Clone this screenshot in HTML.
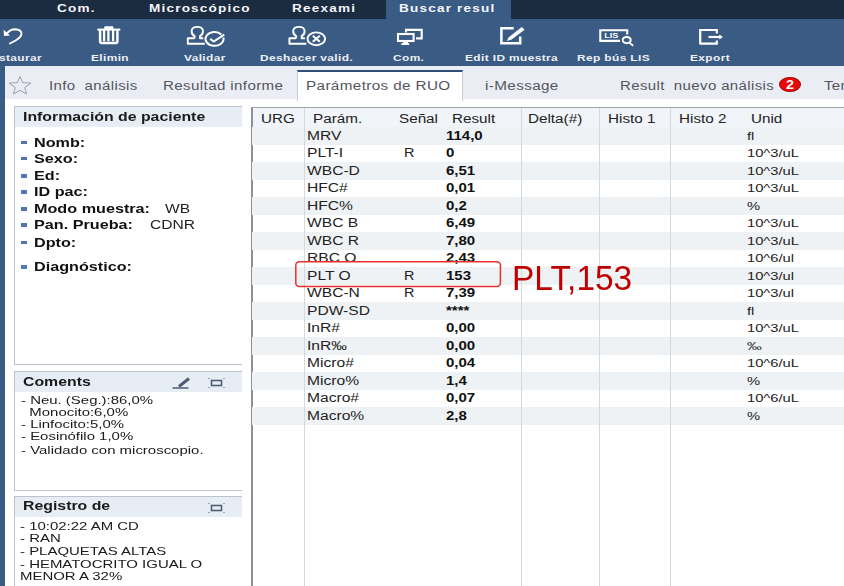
<!DOCTYPE html><html><head><meta charset="utf-8"><style>
*{margin:0;padding:0;box-sizing:border-box}
html,body{width:844px;height:586px;overflow:hidden;background:#fff;font-family:"Liberation Sans",sans-serif}
body{position:relative}
.a{position:absolute;white-space:nowrap;transform-origin:0 0}
.tt{color:#f4f6fa;font-weight:bold;font-size:11.4px;line-height:13px;letter-spacing:1px}
.tl{color:#eef1f6;font-weight:bold;font-size:9.3px;line-height:11px;letter-spacing:0.3px}
.tb{color:#55555e;font-size:12px;line-height:14px;letter-spacing:0.3px}
.ph{font-weight:bold;color:#1a1a1a;font-size:12px;line-height:14px}
.pi{font-weight:bold;color:#111;font-size:13px;line-height:15px}
.pv{color:#222;font-size:12px;line-height:14px}
.cm{color:#1a1a1a;font-size:11.5px;line-height:13px}
.th{color:#222;font-size:12px;line-height:14px}
.td{color:#222;font-size:12px;line-height:14px}
.tr{color:#111;font-size:12px;line-height:14px;font-weight:bold}
.un{color:#222;font-size:11.5px;line-height:14px}
svg{position:absolute;overflow:visible}
</style></head><body><div id="wrap" style="position:absolute;left:0;top:0;width:844px;height:586px;overflow:hidden;filter:blur(0.35px)">
<div class="a" style="left:0;top:0;width:844px;height:19px;background:#1b2b40"></div>
<div class="a" style="left:386px;top:0;width:125px;height:19px;background:#3a5b83"></div>
<div class="a tt" style="left:57px;top:2.3px;transform:scaleX(1.19);">Com.</div>
<div class="a tt" style="left:149px;top:2.3px;transform:scaleX(1.19);">Microscópico</div>
<div class="a tt" style="left:292px;top:2.3px;transform:scaleX(1.19);">Reexami</div>
<div class="a tt" style="left:399px;top:2.3px;transform:scaleX(1.19);">Buscar resul</div>
<div class="a" style="left:0;top:19px;width:844px;height:47px;background:#3a5b83"></div>
<div class="a tl" style="left:-17px;top:53.2px;transform:scaleX(1.28);">Restaurar</div>
<div class="a tl" style="left:91px;top:53.2px;transform:scaleX(1.28);">Elimin</div>
<div class="a tl" style="left:184px;top:53.2px;transform:scaleX(1.28);">Validar</div>
<div class="a tl" style="left:260px;top:53.2px;transform:scaleX(1.28);">Deshacer valid.</div>
<div class="a tl" style="left:393px;top:53.2px;transform:scaleX(1.28);">Com.</div>
<div class="a tl" style="left:465px;top:53.2px;transform:scaleX(1.28);">Edit ID muestra</div>
<div class="a tl" style="left:577px;top:53.2px;transform:scaleX(1.28);">Rep bús LIS</div>
<div class="a tl" style="left:690px;top:53.2px;transform:scaleX(1.28);">Export</div>
<svg style="left:0;top:0" width="844" height="66"><path d="M7 33.5 Q10 29.3 15 29.3 Q21 29.5 21.5 33.5 Q21.5 37 15.5 40.5 L10 43.5" stroke="#fff" fill="none" stroke-width="1.9" stroke-linecap="round"/><path d="M3.6 29.8 L4 36 L10 35.5 Z" fill="#fff"/><rect x="104.2" y="26.2" width="9.3" height="3" rx="1.2" fill="#fff"/><rect x="97.3" y="28.6" width="23" height="2" fill="#fff"/><path d="M100.1 30 V41.3 Q100.1 43 101.8 43 H115.7 Q117.4 43 117.4 41.3 V30" stroke="#fff" fill="none" stroke-width="2.5"/><path d="M104.1 30 V41.3 M108.4 30 V41.3 M113.1 30 V41.3" stroke="#fff" fill="none" stroke-width="2.3"/><path d="M194.6 38.3 V36.2 Q191.4 34.5 191.6 30.8 Q192.0 26.9 197.3 26.9 Q202.6 26.9 203.0 30.8 Q203.2 34.5 200.0 36.2 V38.3 H203.3 M194.6 38.3 H187.8 V43.8 H204.8" stroke="#fff" fill="none" stroke-width="1.9" stroke-linejoin="round"/><path d="M221.4 34.4 A9 6.9 0 1 0 223.4 37.6" stroke="#fff" fill="none" stroke-width="2"/><path d="M210.2 38.9 L213.7 41.6 L224.3 34.6" stroke="#fff" fill="none" stroke-width="2"/><path d="M296.2 38.3 V36.2 Q293.0 34.5 293.2 30.8 Q293.6 26.9 298.9 26.9 Q304.2 26.9 304.6 30.8 Q304.8 34.5 301.6 36.2 V38.3 H304.9 M296.2 38.3 H289.4 V43.8 H306.4" stroke="#fff" fill="none" stroke-width="1.9" stroke-linejoin="round"/><ellipse cx="316.3" cy="38.8" rx="8.8" ry="6.4" stroke="#fff" fill="none" stroke-width="1.9"/><path d="M312.8 35.8 L319.8 41.8 M319.8 35.8 L312.8 41.8" stroke="#fff" fill="none" stroke-width="2"/><path d="M406 32.5 V29.9 H421.7 V38.4 H416" stroke="#fff" fill="none" stroke-width="2.1"/><rect x="398" y="34" width="15.6" height="7" stroke="#fff" fill="none" stroke-width="2.1"/><path d="M403.4 41.5 H407.6 L408.3 43.3 H409.2 V45 H401.3 V43.3 H402.7 Z" fill="#fff"/><path d="M513.7 28.3 H501.4 V43.3 H520.2 V36.6" stroke="#fff" fill="none" stroke-width="2.5"/><path d="M506.8 41 L508.8 37.2 L521.8 27.1 L524.6 29.8 L511.6 39.6 Z" fill="#fff"/><path d="M620 40.9 H600.3 V30.3 H627.2 V34.4" stroke="#fff" fill="none" stroke-width="2.1"/><text x="503.5" y="38" fill="#fff" font-family="Liberation Sans" font-weight="bold" font-size="7.6" transform="scale(1.2 1)">LIS</text><ellipse cx="626.7" cy="40.1" rx="4" ry="3.1" stroke="#fff" fill="none" stroke-width="2"/><path d="M629.3 42.6 L633.2 45.8" stroke="#fff" fill="none" stroke-width="1.8"/><path d="M716.8 33.5 V30 H700.2 V43.5 Q700.2 43.6 700.4 43.6 H716.8 V40.5" stroke="#fff" fill="none" stroke-width="2.2"/><path d="M708.5 37 H720.5" stroke="#fff" fill="none" stroke-width="2.2"/><path d="M719.3 34.6 L723 37 L719.3 39.4 Z" fill="#fff"/></svg>
<div class="a" style="left:0;top:66px;width:5px;height:520px;background:#3a5b83"></div>
<div class="a" style="left:5px;top:66px;width:839px;height:33px;background:#eaeef4"></div>
<div class="a" style="left:297px;top:70px;width:166px;height:31px;background:#fff;border-left:1px solid #c6ccd6;border-right:1px solid #c6ccd6;border-top:2px solid #2f4f78"></div>
<svg style="left:0;top:0" width="60" height="100"><path d="M20 76.5 L22.6 82.6 L31 83.2 L24.6 87.6 L26.7 94 L20 90.3 L13.3 94 L15.4 87.6 L9 83.2 L17.4 82.6 Z" fill="none" stroke="#9aa0a8" stroke-width="1"/></svg>
<div class="a tb" style="left:49px;top:79px;transform:scaleX(1.25);">Info&nbsp; análisis</div>
<div class="a tb" style="left:163px;top:79px;transform:scaleX(1.26);">Resultad informe</div>
<div class="a tb" style="left:306px;top:79px;transform:scaleX(1.27);">Parámetros de RUO</div>
<div class="a tb" style="left:485px;top:79px;transform:scaleX(1.27);">i-Message</div>
<div class="a tb" style="left:620px;top:79px;transform:scaleX(1.25);">Result&nbsp; nuevo análisis</div>
<div class="a tb" style="left:824px;top:79px;transform:scaleX(1.25);">Ten</div>
<div class="a" style="left:779.3px;top:77.2px;width:21.6px;height:15.2px;border-radius:50%;background:#e60a0a;border:1px solid #b00808"></div>
<div class="a" style="left:786px;top:78px;color:#fff;font-weight:bold;font-size:12px;line-height:14px;transform:scaleX(1.2)">2</div>
<div class="a" style="left:14px;top:106px;width:228px;height:259px;border:1px solid #bcc3ce;border-right:none;background:#fff"></div>
<div class="a" style="left:15px;top:107px;width:227px;height:19.5px;background:#e7edf5"></div>
<div class="a ph" style="left:23px;top:110px;transform:scaleX(1.32);">Información de paciente</div>
<div class="a" style="left:14px;top:371px;width:228px;height:120px;border:1px solid #bcc3ce;border-right:none;background:#fff"></div>
<div class="a" style="left:15px;top:372px;width:227px;height:19.5px;background:#e7edf5"></div>
<div class="a ph" style="left:23px;top:375px;transform:scaleX(1.32);">Coments</div>
<div class="a" style="left:14px;top:496px;width:228px;height:100px;border:1px solid #bcc3ce;border-right:none;background:#fff"></div>
<div class="a" style="left:15px;top:497px;width:227px;height:19.5px;background:#e7edf5"></div>
<div class="a ph" style="left:23px;top:498.5px;transform:scaleX(1.32);">Registro de</div>
<div class="a" style="left:20.5px;top:140.6px;width:6px;height:3.5px;background:#5476b4"></div>
<div class="a pi" style="left:34px;top:134.6px;transform:scaleX(1.245);">Nomb:</div>
<div class="a" style="left:20.5px;top:156.6px;width:6px;height:3.5px;background:#5476b4"></div>
<div class="a pi" style="left:34px;top:150.6px;transform:scaleX(1.245);">Sexo:</div>
<div class="a" style="left:20.5px;top:174px;width:6px;height:3.5px;background:#5476b4"></div>
<div class="a pi" style="left:34px;top:168px;transform:scaleX(1.245);">Ed:</div>
<div class="a" style="left:20.5px;top:190px;width:6px;height:3.5px;background:#5476b4"></div>
<div class="a pi" style="left:34px;top:184px;transform:scaleX(1.245);">ID pac:</div>
<div class="a" style="left:20.5px;top:207px;width:6px;height:3.5px;background:#5476b4"></div>
<div class="a pi" style="left:34px;top:201px;transform:scaleX(1.245);">Modo muestra:</div>
<div class="a pv" style="left:165px;top:202px;transform:scaleX(1.3);">WB</div>
<div class="a" style="left:20.5px;top:223px;width:6px;height:3.5px;background:#5476b4"></div>
<div class="a pi" style="left:34px;top:217px;transform:scaleX(1.245);">Pan. Prueba:</div>
<div class="a pv" style="left:150px;top:218px;transform:scaleX(1.3);">CDNR</div>
<div class="a" style="left:20.5px;top:240.5px;width:6px;height:3.5px;background:#5476b4"></div>
<div class="a pi" style="left:34px;top:234.5px;transform:scaleX(1.245);">Dpto:</div>
<div class="a" style="left:20.5px;top:265px;width:6px;height:3.5px;background:#5476b4"></div>
<div class="a pi" style="left:34px;top:259px;transform:scaleX(1.245);">Diagnóstico:</div>
<svg style="left:0;top:0" width="250" height="586"><path d="M172.5 388 H188.5" stroke="#4e5e74" stroke-width="1.5"/><path d="M179 386.5 L189 378.5" stroke="#4e5e74" stroke-width="3"/><rect x="211.5" y="380.5" width="10" height="5" fill="none" stroke="#4e5e74" stroke-width="1.6"/><path d="M208.5 378.5h1M223.5 378.5h1M208.5 387.5h1M223.5 387.5h1" stroke="#4e5e74" stroke-width="1"/><rect x="211.5" y="505.5" width="10" height="5" fill="none" stroke="#4e5e74" stroke-width="1.6"/><path d="M208.5 503.5h1M223.5 503.5h1M208.5 512.5h1M223.5 512.5h1" stroke="#4e5e74" stroke-width="1"/></svg>
<div class="a cm" style="left:21px;top:393.9px;transform:scaleX(1.3);">- Neu. (Seg.):86,0%</div>
<div class="a cm" style="left:21px;top:405.8px;transform:scaleX(1.3);">&nbsp; Monocito:6,0%</div>
<div class="a cm" style="left:21px;top:418.2px;transform:scaleX(1.3);">- Linfocito:5,0%</div>
<div class="a cm" style="left:21px;top:430.1px;transform:scaleX(1.3);">- Eosinófilo 1,0%</div>
<div class="a cm" style="left:21px;top:443.7px;transform:scaleX(1.3);">- Validado con microscopio.</div>
<div class="a cm" style="left:20px;top:519.5px;transform:scaleX(1.3);">- 10:02:22 AM CD</div>
<div class="a cm" style="left:20px;top:531.5px;transform:scaleX(1.3);">- RAN</div>
<div class="a cm" style="left:20px;top:545.0px;transform:scaleX(1.3);">- PLAQUETAS ALTAS</div>
<div class="a cm" style="left:20px;top:557.5px;transform:scaleX(1.3);">- HEMATOCRITO IGUAL O</div>
<div class="a cm" style="left:20px;top:570.2px;transform:scaleX(1.3);">MENOR A 32%</div>
<div class="a" style="left:251px;top:107px;width:600px;height:490px;border:1px solid #9ea3ab;border-left:2px solid #8e9298;background:#fff"></div>
<div class="a" style="left:253px;top:108px;width:592px;height:19px;background:#f1f4f8"></div>
<div class="a" style="left:252px;top:127.00px;width:592px;height:17.5px;background:#eff2f5"></div>
<div class="a" style="left:252px;top:162.00px;width:592px;height:17.5px;background:#eff2f5"></div>
<div class="a" style="left:252px;top:197.00px;width:592px;height:17.5px;background:#eff2f5"></div>
<div class="a" style="left:252px;top:232.00px;width:592px;height:17.5px;background:#eff2f5"></div>
<div class="a" style="left:252px;top:267.00px;width:592px;height:17.5px;background:#eff2f5"></div>
<div class="a" style="left:252px;top:302.00px;width:592px;height:17.5px;background:#eff2f5"></div>
<div class="a" style="left:252px;top:337.00px;width:592px;height:17.5px;background:#eff2f5"></div>
<div class="a" style="left:252px;top:372.00px;width:592px;height:17.5px;background:#eff2f5"></div>
<div class="a" style="left:252px;top:407.00px;width:592px;height:17.5px;background:#eff2f5"></div>
<div class="a" style="left:303.5px;top:108px;width:1px;height:478px;background:#d4d9e0"></div>
<div class="a" style="left:521px;top:108px;width:1px;height:478px;background:#d4d9e0"></div>
<div class="a" style="left:598.5px;top:108px;width:1px;height:478px;background:#d4d9e0"></div>
<div class="a" style="left:670px;top:108px;width:1px;height:478px;background:#d4d9e0"></div>
<div class="a th" style="left:261px;top:112px;transform:scaleX(1.27);">URG</div>
<div class="a th" style="left:313px;top:112px;transform:scaleX(1.27);">Parám.</div>
<div class="a th" style="left:399px;top:112px;transform:scaleX(1.27);">Señal</div>
<div class="a th" style="left:452px;top:112px;transform:scaleX(1.27);">Result</div>
<div class="a th" style="left:528px;top:112px;transform:scaleX(1.27);">Delta(#)</div>
<div class="a th" style="left:608px;top:112px;transform:scaleX(1.27);">Histo 1</div>
<div class="a th" style="left:679px;top:112px;transform:scaleX(1.27);">Histo 2</div>
<div class="a th" style="left:751px;top:112px;transform:scaleX(1.27);">Unid</div>
<div class="a td" style="left:307px;top:128.8px;transform:scaleX(1.3);">MRV</div>
<div class="a tr" style="left:446px;top:128.8px;transform:scaleX(1.25);">114,0</div>
<div class="a un" style="left:747px;top:128.8px;transform:scaleX(1.28);">fl</div>
<div class="a td" style="left:307px;top:146.3px;transform:scaleX(1.3);">PLT-I</div>
<div class="a td" style="left:404px;top:146.3px;transform:scaleX(1.2);">R</div>
<div class="a tr" style="left:446px;top:146.3px;transform:scaleX(1.25);">0</div>
<div class="a un" style="left:747px;top:146.3px;transform:scaleX(1.28);">10^3/uL</div>
<div class="a td" style="left:307px;top:163.8px;transform:scaleX(1.3);">WBC-D</div>
<div class="a tr" style="left:446px;top:163.8px;transform:scaleX(1.25);">6,51</div>
<div class="a un" style="left:747px;top:163.8px;transform:scaleX(1.28);">10^3/uL</div>
<div class="a td" style="left:307px;top:181.3px;transform:scaleX(1.3);">HFC#</div>
<div class="a tr" style="left:446px;top:181.3px;transform:scaleX(1.25);">0,01</div>
<div class="a un" style="left:747px;top:181.3px;transform:scaleX(1.28);">10^3/uL</div>
<div class="a td" style="left:307px;top:198.8px;transform:scaleX(1.3);">HFC%</div>
<div class="a tr" style="left:446px;top:198.8px;transform:scaleX(1.25);">0,2</div>
<div class="a un" style="left:747px;top:198.8px;transform:scaleX(1.28);">%</div>
<div class="a td" style="left:307px;top:216.3px;transform:scaleX(1.3);">WBC B</div>
<div class="a tr" style="left:446px;top:216.3px;transform:scaleX(1.25);">6,49</div>
<div class="a un" style="left:747px;top:216.3px;transform:scaleX(1.28);">10^3/uL</div>
<div class="a td" style="left:307px;top:233.8px;transform:scaleX(1.3);">WBC R</div>
<div class="a tr" style="left:446px;top:233.8px;transform:scaleX(1.25);">7,80</div>
<div class="a un" style="left:747px;top:233.8px;transform:scaleX(1.28);">10^3/uL</div>
<div class="a td" style="left:307px;top:251.3px;transform:scaleX(1.3);">RBC O</div>
<div class="a tr" style="left:446px;top:251.3px;transform:scaleX(1.25);">2,43</div>
<div class="a un" style="left:747px;top:251.3px;transform:scaleX(1.28);">10^6/ul</div>
<div class="a td" style="left:307px;top:268.8px;transform:scaleX(1.3);">PLT O</div>
<div class="a td" style="left:404px;top:268.8px;transform:scaleX(1.2);">R</div>
<div class="a tr" style="left:446px;top:268.8px;transform:scaleX(1.25);">153</div>
<div class="a un" style="left:747px;top:268.8px;transform:scaleX(1.28);">10^3/ul</div>
<div class="a td" style="left:307px;top:286.3px;transform:scaleX(1.3);">WBC-N</div>
<div class="a td" style="left:404px;top:286.3px;transform:scaleX(1.2);">R</div>
<div class="a tr" style="left:446px;top:286.3px;transform:scaleX(1.25);">7,39</div>
<div class="a un" style="left:747px;top:286.3px;transform:scaleX(1.28);">10^3/ul</div>
<div class="a td" style="left:307px;top:303.8px;transform:scaleX(1.3);">PDW-SD</div>
<div class="a tr" style="left:446px;top:303.8px;transform:scaleX(1.25);">****</div>
<div class="a un" style="left:747px;top:303.8px;transform:scaleX(1.28);">fl</div>
<div class="a td" style="left:307px;top:321.3px;transform:scaleX(1.3);">InR#</div>
<div class="a tr" style="left:446px;top:321.3px;transform:scaleX(1.25);">0,00</div>
<div class="a un" style="left:747px;top:321.3px;transform:scaleX(1.28);">10^3/uL</div>
<div class="a td" style="left:307px;top:338.8px;transform:scaleX(1.3);">InR‰</div>
<div class="a tr" style="left:446px;top:338.8px;transform:scaleX(1.25);">0,00</div>
<div class="a un" style="left:747px;top:338.8px;transform:scaleX(1.28);">‰</div>
<div class="a td" style="left:307px;top:356.3px;transform:scaleX(1.3);">Micro#</div>
<div class="a tr" style="left:446px;top:356.3px;transform:scaleX(1.25);">0,04</div>
<div class="a un" style="left:747px;top:356.3px;transform:scaleX(1.28);">10^6/uL</div>
<div class="a td" style="left:307px;top:373.8px;transform:scaleX(1.3);">Micro%</div>
<div class="a tr" style="left:446px;top:373.8px;transform:scaleX(1.25);">1,4</div>
<div class="a un" style="left:747px;top:373.8px;transform:scaleX(1.28);">%</div>
<div class="a td" style="left:307px;top:391.3px;transform:scaleX(1.3);">Macro#</div>
<div class="a tr" style="left:446px;top:391.3px;transform:scaleX(1.25);">0,07</div>
<div class="a un" style="left:747px;top:391.3px;transform:scaleX(1.28);">10^6/uL</div>
<div class="a td" style="left:307px;top:408.8px;transform:scaleX(1.3);">Macro%</div>
<div class="a tr" style="left:446px;top:408.8px;transform:scaleX(1.25);">2,8</div>
<div class="a un" style="left:747px;top:408.8px;transform:scaleX(1.28);">%</div>
<svg style="left:0;top:0" width="844" height="586"><rect x="295.8" y="261.8" width="204.6" height="24.6" rx="3.5" fill="none" stroke="#e8302c" stroke-width="1.5"/></svg>
<div class="a" style="left:511.5px;top:260px;color:#c00000;font-size:35px;line-height:36px;transform:scaleX(0.955)">PLT,153</div>
</div></body></html>
